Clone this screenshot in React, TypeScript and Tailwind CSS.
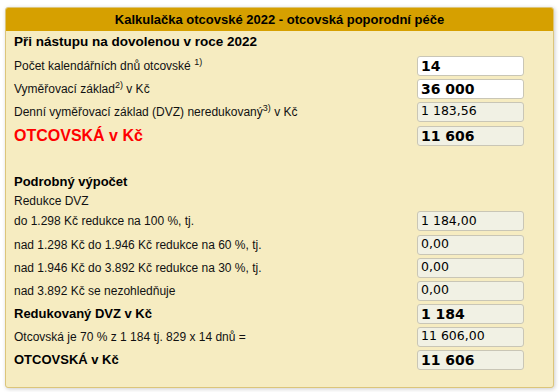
import React from "react";

type Row = {
	label: React.ReactNode;
	value: string;
	bold?: boolean;
	editable?: boolean;
	labelClass?: string;
	h?: string;
};

function Field({ value, bold, editable }: { value: string; bold?: boolean; editable?: boolean }) {
	return (
		<div
			className={`flex items-center w-[107px] h-[20px] px-[3px] rounded-[3px] border border-[#c9c6b6] text-black font-['DejaVu_Sans',sans-serif] leading-none ${
				editable ? "bg-white" : "bg-[#f1f1e4]"
			} ${bold ? "font-bold text-[14px]" : "text-[12.5px]"}`}>
			{value}
		</div>
	);
}

function Line({ label, value, bold, editable, labelClass, h }: Row) {
	return (
		<div className={`flex items-center justify-between ${h ?? "h-[23px]"}`}>
			<div className={labelClass ?? "text-[12px] text-[#111]"}>{label}</div>
			<Field value={value} bold={bold} editable={editable} />
		</div>
	);
}

export default function App() {
	const top: Row[] = [
		{
			label: (
				<>
					Počet kalendářních dnů otcovské <sup className="text-[9px]">1)</sup>
				</>
			),
			value: "14",
			bold: true,
			editable: true,
		},
		{
			label: (
				<>
					Vyměřovací základ<sup className="text-[9px]">2)</sup> v Kč
				</>
			),
			value: "36 000",
			bold: true,
			editable: true,
		},
		{
			label: (
				<>
					Denní vyměřovací základ (DVZ) neredukovaný<sup className="text-[9px]">3)</sup> v Kč
				</>
			),
			value: "1 183,56",
		},
		{
			label: "OTCOVSKÁ v Kč",
			value: "11 606",
			bold: true,
			labelClass: "text-[16px] font-bold text-[#ff0000]",
			h: "h-[25px]",
		},
	];

	const detail: Row[] = [
		{ label: "do 1.298 Kč redukce na 100 %, tj.", value: "1 184,00", h: "h-[24px]" },
		{ label: "nad 1.298 Kč do 1.946 Kč redukce na 60 %, tj.", value: "0,00" },
		{ label: "nad 1.946 Kč do 3.892 Kč redukce na 30 %, tj.", value: "0,00" },
		{ label: "nad 3.892 Kč se nezohledňuje", value: "0,00" },
		{
			label: "Redukovaný DVZ v Kč",
			value: "1 184",
			bold: true,
			labelClass: "text-[13px] font-bold text-black",
		},
		{ label: "Otcovská je 70 % z 1 184 tj. 829 x 14 dnů =", value: "11 606,00" },
		{
			label: "OTCOVSKÁ v Kč",
			value: "11 606",
			bold: true,
			labelClass: "text-[13px] font-bold text-black",
		},
	];

	return (
		<div className="min-h-screen bg-white pt-[7px] px-[5px] font-['Liberation_Sans',Arial,sans-serif]">
			<div className="w-[549px] rounded-[3px] border border-[#dcc57a] bg-[#f6ecc1] shadow-[1px_1px_4px_rgba(0,0,0,0.2)] overflow-hidden">
				<div className="h-[23px] bg-[#d6a000] flex items-center justify-center text-[13px] font-bold text-black">
					Kalkulačka otcovské 2022 - otcovská poporodní péče
				</div>
				<div className="pl-[8px] pr-[29px] pb-[16px]">
					<div className="h-[23px] flex items-end pb-[2px] text-[13.5px] font-bold text-black">
						Při nástupu na dovolenou v roce 2022
					</div>
					{top.map((r, i) => (
						<Line key={i} {...r} />
					))}
					<div className="h-[24px]" />
					<div className="h-[20px] flex items-center text-[13px] font-bold text-black">
						Podrobný výpočet
					</div>
					<div className="h-[17px] flex items-center text-[12px] text-[#111]">Redukce DVZ</div>
					{detail.map((r, i) => (
						<Line key={i} {...r} />
					))}
				</div>
			</div>
		</div>
	);
}
